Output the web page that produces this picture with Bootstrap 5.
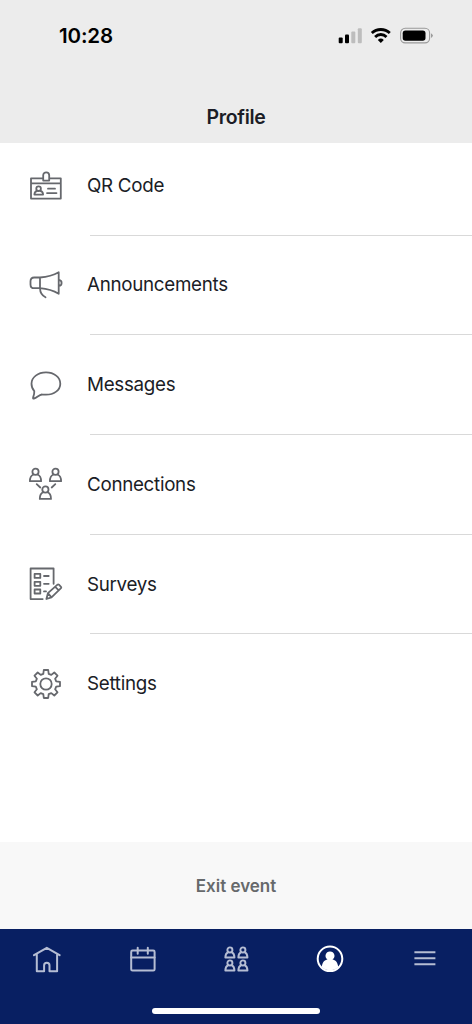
<!DOCTYPE html>
<html lang="en">
<head>
<meta charset="utf-8">
<meta name="viewport" content="width=device-width, initial-scale=1">
<title>Profile</title>
<link href="https://cdn.jsdelivr.net/npm/bootstrap@5.3.0/dist/css/bootstrap.min.css" rel="stylesheet">
<style>
  body { font-family: Inter, "Liberation Sans", sans-serif; color: #1b1d26; }
  svg { display: block; fill: none; flex: none; }
  .app { height: 1024px; }
  .top-area { height: 143px; background: #ececec; }
  .status-row { height: 71px; padding: 0 39px 0 59px; }
  .clock { font-size: 20.5px; font-weight: 600; color: #000; letter-spacing: -.15px; padding-top: 2px; }
  .screen-title { font-size: 19.5px; font-weight: 600; line-height: 24px; padding-top: 34px; letter-spacing: -.3px; }
  .menu-list { margin-top: -7px; }
  .menu-item { height: 98.7px; padding-left: 28px; gap: 23px; font-size: 18.8px; letter-spacing: -.3px; color: inherit; }
  .menu-item span { padding-top: 1px; }
  .menu-item svg { stroke: #66686d; stroke-width: 1.8; stroke-linejoin: round; stroke-linecap: round; }
  .divider { height: 1px; margin-left: 90px; background: #d9d9d9; }
  .exit-area { height: 87.5px; background: #f8f8f8; color: #66696b; font-size: 17px; font-weight: 600; }
  .exit-area span { display: block; padding-top: 2px; }
  .tab-area { height: 95px; background: #081f62; padding-top: 15.5px; }
  .tab-area svg { stroke: #b5bdd3; stroke-width: 2; stroke-linejoin: round; stroke-linecap: round; }
  .tab-area .people { stroke-width: 2.4; }
  .home-bar { width: 168px; height: 6px; margin-bottom: 10px; }
</style>
</head>
<body class="bg-white">
<!-- shared person outline -->
<svg width="0" height="0" class="position-absolute">
  <symbol id="person" viewBox="0 0 14 16" overflow="visible">
    <circle cx="7" cy="4.3" r="3.1"/>
    <path d="M4.9 7C2.6 8 1.4 9.8 1.4 13.7h11.2C12.6 9.8 11.4 8 9.1 7"/>
  </symbol>
</svg>
<div class="app d-flex flex-column overflow-hidden">
  <header class="top-area">
    <div class="status-row d-flex align-items-center justify-content-between">
      <span class="clock">10:28</span>
      <svg width="95" height="18" viewBox="0 0 95 18">
        <g fill="#000"><rect x="0.7" y="10.5" width="4" height="5.7" rx="1"/><rect x="7" y="7.5" width="4" height="8.7" rx="1"/></g>
        <g fill="#bdbdbd"><rect x="13.3" y="4.5" width="4" height="11.7" rx="1"/><rect x="19.8" y="1.3" width="4" height="14.9" rx="1"/></g>
        <g stroke="#000" stroke-width="2.8"><path d="M33.8 6.1a13 13 0 0 1 18 0"/><path d="M37.1 9.9a8 8 0 0 1 11.4 0"/></g>
        <path fill="#000" d="M39.8 12.9a4.5 4.5 0 0 1 6 0L42.8 15.9z"/>
        <rect x="62.6" y="1.3" width="29" height="14.6" rx="4.6" stroke="#999" stroke-width="1.1"/>
        <rect x="64.7" y="3.4" width="22.8" height="10.4" rx="2.8" fill="#000"/>
        <path d="M93.2 6.2q3 2.4 0 4.8z" fill="#888"/>
      </svg>
    </div>
    <h1 class="screen-title text-center mb-0">Profile</h1>
  </header>
  <main class="menu-list flex-grow-1">
    <a class="menu-item d-flex align-items-center text-decoration-none" href="#">
      <svg width="36" height="36" viewBox="0 -0.7 36 36"><path d="M15 10.6H3v20.3h29.8V10.6H21.2M3 15.6h29.8"/><path fill="#fff" d="M15.2 12.9V7.6a3 3 0 0 1 6 0v5.3z"/><circle cx="10.6" cy="21" r="2.3"/><path d="M9 23.3c-1.7.3-2.5 1.3-2.6 3.6h8.7c-.1-2.3-.9-3.3-2.6-3.6M20 21h7M19 25.4h9.5"/></svg>
      <span>QR Code</span>
    </a>
    <div class="divider"></div>
    <a class="menu-item d-flex align-items-center text-decoration-none" href="#">
      <svg width="36" height="36" viewBox="0 -0.3 36 36"><path d="M12 10.2H6.2Q2.5 10.2 2.5 14v3.1q0 3.8 3.7 3.8H12zM12 10.2Q23 9.4 30.7 5v21.5Q23 21.8 12 20.9M30.9 12.6q2.7.3 2.7 3t-2.7 3M12 21q.2 6.5 5.5 9"/></svg>
      <span>Announcements</span>
    </a>
    <div class="divider"></div>
    <a class="menu-item d-flex align-items-center text-decoration-none" href="#">
      <svg width="36" height="36" viewBox="0 0 36 36"><path d="M6.3 24.1C4.4 22.1 3.5 19.5 3.5 16.8 3.5 10.2 10 5.4 18 5.4s14.3 4.8 14.3 11.3S26 27.7 18 27.7c-1.6 0-2.7-.1-4.1-.2-3 .4-5 3.3-8 4-.7.2-1.1-.2-.8-1 .9-2.4 1.4-3.7 1.2-6.4z"/></svg>
      <span>Messages</span>
    </a>
    <div class="divider"></div>
    <a class="menu-item d-flex align-items-center text-decoration-none" href="#">
      <svg width="36" height="36" viewBox="0 0 36 36"><use href="#person" x="0.5" y="1.5" width="14" height="16"/><use href="#person" x="20.5" y="1.5" width="14" height="16"/><use href="#person" x="10.4" y="19.2" width="14" height="16"/><path d="M8.7 18.2l3.6 3.3M27.3 18.2l-3.6 3.3"/></svg>
      <span>Connections</span>
    </a>
    <div class="divider"></div>
    <a class="menu-item d-flex align-items-center text-decoration-none" href="#">
      <svg width="36" height="36" viewBox="0 0 36 36"><path d="M25.6 17.8V2.5H2.6v30.6h12.1M6.6 7.9h5.7v4H6.6zM6.6 15.8h5.7v4H6.6zM6.6 23.5h5.7v4H6.6zM16 10h4.7M16 17.8h4.7M16 25.4h2M18.4 33l1.5-5.8L29.5 18.6q.7-.6 1.4.1l2.1 2.1q.6.7 0 1.4L23.5 31.4zM19.9 27.2l3.6 4.2M27.2 20.8l3.6 3.6"/></svg>
      <span>Surveys</span>
    </a>
    <div class="divider"></div>
    <a class="menu-item d-flex align-items-center text-decoration-none" href="#">
      <svg width="36" height="36" viewBox="-18 -18 36 36"><circle r="5.7"/><path d="M-2.2-14H2.2L2.7-10.2 5.3-9.1 8.3-11.5 11.5-8.3 9.1-5.3 10.2-2.7 14-2.2V2.2L10.2 2.7 9.1 5.3 11.5 8.3 8.3 11.5 5.3 9.1 2.7 10.2 2.2 14H-2.2L-2.7 10.2-5.3 9.1-8.3 11.5-11.5 8.3-9.1 5.3-10.2 2.7-14 2.2V-2.2L-10.2-2.7-9.1-5.3-11.5-8.3-8.3-11.5-5.3-9.1-2.7-10.2z"/></svg>
      <span>Settings</span>
    </a>
  </main>
  <button class="exit-area btn rounded-0 border-0 w-100 p-0 flex-shrink-0"><span>Exit event</span></button>
  <nav class="tab-area d-flex flex-column justify-content-between align-items-center flex-shrink-0">
    <div class="d-flex justify-content-around w-100">
      <svg width="28" height="28" viewBox="0 0 28 28"><path d="M1 10.2L13.8 2.8 26.6 10.2M3.8 9v17.2h7.3v-5.7a2.7 2.7 0 0 1 5.4 0v5.7h7.6V9"/></svg>
      <svg width="28" height="28" viewBox="0 0 28 28"><rect x="3.2" y="5.6" width="23.4" height="19.9" rx="1.3"/><path d="M3.2 12.6h23.4M9.7 2.8v6M19.8 2.8v6"/></svg>
      <svg class="people" width="28" height="28" viewBox="0 0 28 28"><use href="#person" x="1.9" y="1.4" width="12" height="13"/><use href="#person" x="14.9" y="1.4" width="12" height="13"/><use href="#person" x="1.9" y="14.4" width="12" height="13"/><use href="#person" x="14.9" y="14.4" width="12" height="13"/></svg>
      <svg width="28" height="28" viewBox="0 0 28 28"><circle cx="14" cy="13.8" r="12.3" style="stroke:#fff"/><path fill="#fff" stroke="none" d="M14 6.6a4.3 4.3 0 0 1 2.5 7.9c3 .5 5 2.7 5.8 7.4A12 12 0 0 1 5.7 21.9c.8-4.7 2.8-6.9 5.8-7.4A4.3 4.3 0 0 1 14 6.6z"/></svg>
      <svg width="28" height="28" viewBox="0 0 28 28"><path stroke-linecap="butt" d="M3.4 7.3h21M3.4 13.3h21M3.4 19.2h21"/></svg>
    </div>
    <div class="home-bar bg-white rounded-pill"></div>
  </nav>
</div>
<script src="https://cdn.jsdelivr.net/npm/bootstrap@5.3.0/dist/js/bootstrap.bundle.min.js"></script>
</body>
</html>
